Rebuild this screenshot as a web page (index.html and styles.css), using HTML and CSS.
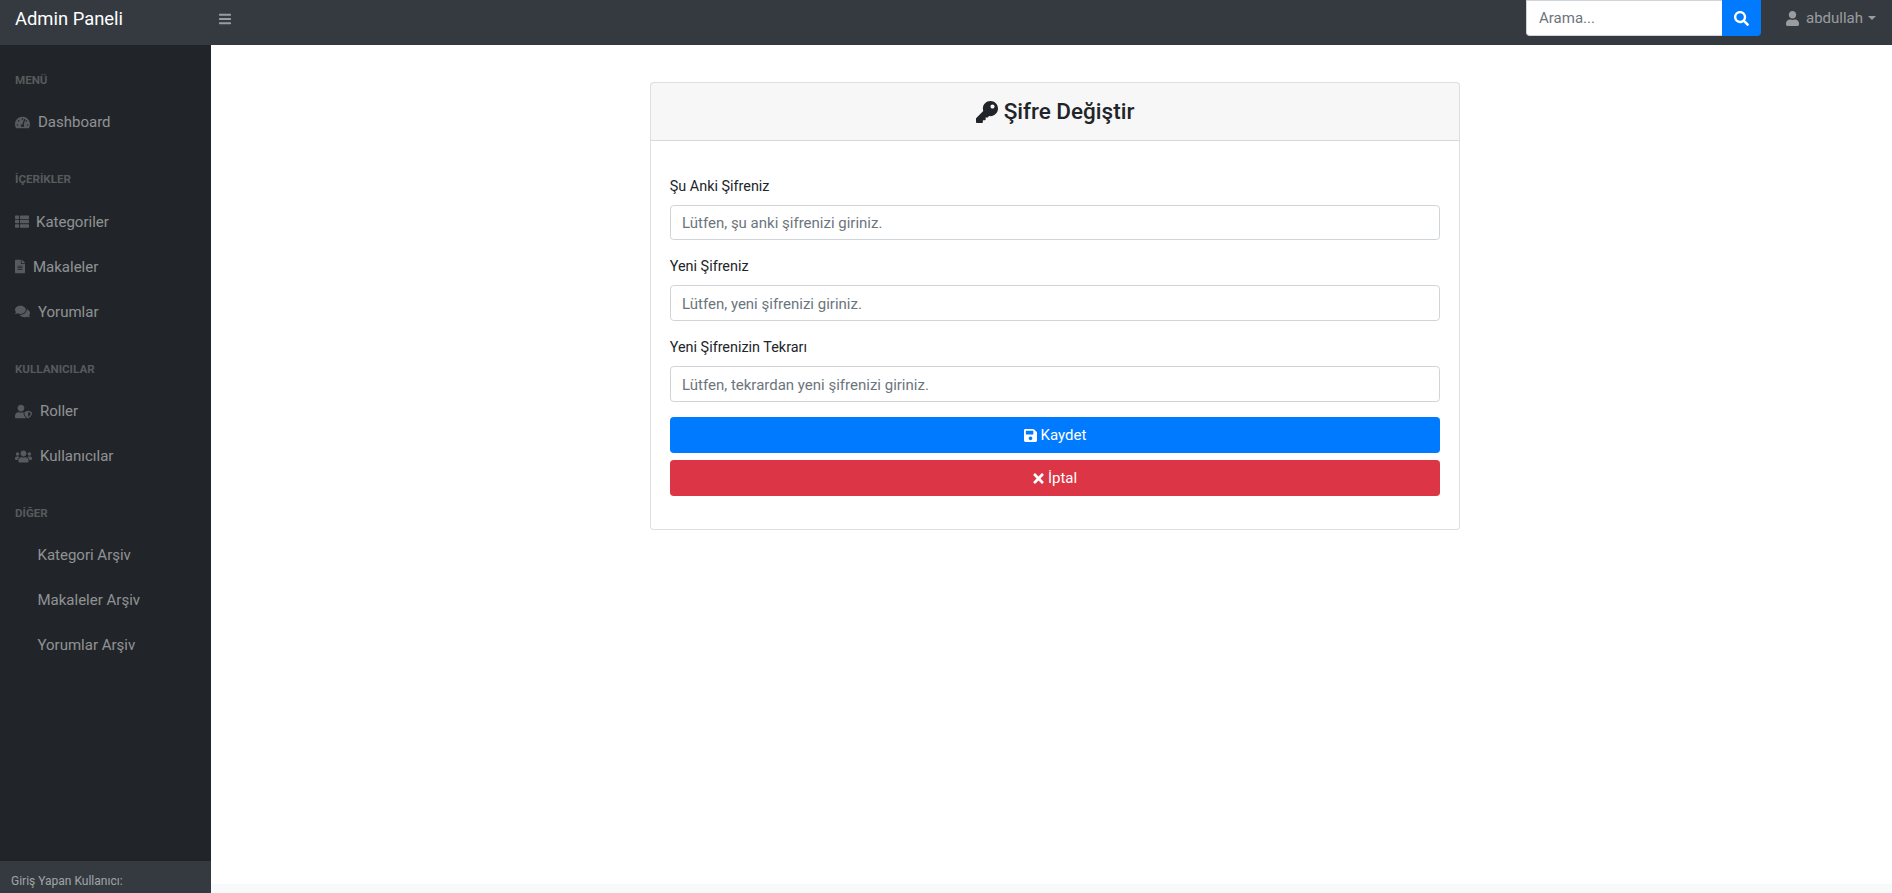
FILE: index.html
```html
<!DOCTYPE html>
<html lang="tr">
<head>
<meta charset="utf-8">
<title>Şifre Değiştir</title>
<link rel="stylesheet" href="styles.css">
</head>
<body>
<header class="topbar">
  <a class="brand">Admin Paneli</a>
  <button class="toggle"><svg class="icon ic-bars" viewBox="0 0 448 512"><path d="M16 132h416c8.837 0 16-7.163 16-16V76c0-8.837-7.163-16-16-16H16C7.163 60 0 67.163 0 76v40c0 8.837 7.163 16 16 16zm0 160h416c8.837 0 16-7.163 16-16v-40c0-8.837-7.163-16-16-16H16c-8.837 0-16 7.163-16 16v40c0 8.837 7.163 16 16 16zm0 160h416c8.837 0 16-7.163 16-16v-40c0-8.837-7.163-16-16-16H16c-8.837 0-16 7.163-16 16v40c0 8.837 7.163 16 16 16z"/></svg></button>
  <form class="search">
    <input class="search-input" type="text" placeholder="Arama...">
    <button class="search-btn" type="button"><svg class="icon ic-search" viewBox="0 0 512 512"><path d="M505 442.7L405.3 343c-4.5-4.5-10.6-7-17-7H372c27.6-35.3 44-79.7 44-128C416 93.1 322.9 0 208 0S0 93.1 0 208s93.1 208 208 208c48.3 0 92.7-16.4 128-44v16.3c0 6.4 2.5 12.5 7 17l99.7 99.7c9.4 9.4 24.6 9.4 33.9 0l28.3-28.3c9.4-9.4 9.4-24.6.1-34zM208 336c-70.7 0-128-57.2-128-128 0-70.7 57.2-128 128-128 70.7 0 128 57.2 128 128 0 70.7-57.2 128-128 128z"/></svg></button>
  </form>
  <a class="user"><svg class="icon ic-user" viewBox="0 0 448 512"><path d="M224 256c70.7 0 128-57.3 128-128S294.7 0 224 0 96 57.3 96 128s57.3 128 128 128zm89.6 32h-16.7c-22.2 10.2-46.9 16-72.9 16s-50.6-5.8-72.9-16h-16.7C60.2 288 0 348.2 0 422.4V464c0 26.5 21.5 48 48 48h352c26.5 0 48-21.5 48-48v-41.6c0-74.2-60.2-134.4-134.4-134.4z"/></svg><span>abdullah</span><i class="caret"></i></a>
</header>
<div class="layout">
  <nav class="sidebar">
    <div class="menu">
      <div class="heading">MENÜ</div>
      <a class="link"><svg class="icon ic-w15" viewBox="0 0 576 512"><path d="M288 32C128.94 32 0 160.94 0 320c0 52.8 14.25 102.26 39.06 144.8 5.61 9.62 16.3 15.2 27.44 15.2h443c11.14 0 21.83-5.58 27.44-15.2C561.75 422.26 576 372.8 576 320c0-159.06-128.94-288-288-288zm0 64c14.71 0 26.58 10.13 30.32 23.65-1.11 2.26-2.64 4.23-3.45 6.67l-9.22 27.67c-5.13 3.49-10.97 6.01-17.64 6.01-17.67 0-32-14.33-32-32S270.33 96 288 96zM96 384c-17.67 0-32-14.33-32-32s14.33-32 32-32 32 14.33 32 32-14.33 32-32 32zm48-160c-17.67 0-32-14.33-32-32s14.33-32 32-32 32 14.33 32 32-14.33 32-32 32zm246.77-72.41l-61.33 184C343.13 347.33 352 364.54 352 384c0 11.72-3.38 22.55-8.88 32H232.88c-5.5-9.45-8.88-20.28-8.88-32 0-33.94 26.5-61.43 59.9-63.59l61.34-184.01c4.17-12.56 17.73-19.45 30.36-15.17 12.57 4.19 19.35 17.79 15.17 30.36zm14.66 57.2l15.52-46.55c3.47-1.29 7.13-2.23 11.05-2.23 17.67 0 32 14.33 32 32s-14.33 32-32 32c-11.38-.01-20.89-6.28-26.57-15.22zM480 384c-17.67 0-32-14.33-32-32s14.33-32 32-32 32 14.33 32 32-14.33 32-32 32z"/></svg>Dashboard</a>
      <div class="heading">İÇERİKLER</div>
      <a class="link"><svg class="icon ic-w14" viewBox="0 0 512 512"><path d="M149.333 216v80c0 13.255-10.745 24-24 24H24c-13.255 0-24-10.745-24-24v-80c0-13.255 10.745-24 24-24h101.333c13.255 0 24 10.745 24 24zM0 376v80c0 13.255 10.745 24 24 24h101.333c13.255 0 24-10.745 24-24v-80c0-13.255-10.745-24-24-24H24c-13.255 0-24 10.745-24 24zM125.333 32H24C10.745 32 0 42.745 0 56v80c0 13.255 10.745 24 24 24h101.333c13.255 0 24-10.745 24-24V56c0-13.255-10.745-24-24-24zm80 448H488c13.255 0 24-10.745 24-24v-80c0-13.255-10.745-24-24-24H205.333c-13.255 0-24 10.745-24 24v80c0 13.255 10.745 24 24 24zm-24-424v80c0 13.255 10.745 24 24 24H488c13.255 0 24-10.745 24-24V56c0-13.255-10.745-24-24-24H205.333c-13.255 0-24 10.745-24 24zm24 264H488c13.255 0 24-10.745 24-24v-80c0-13.255-10.745-24-24-24H205.333c-13.255 0-24 10.745-24 24v80c0 13.255 10.745 24 24 24z"/></svg>Kategoriler</a>
      <a class="link"><svg class="icon ic-w10" viewBox="0 0 384 512"><path d="M224 136V0H24C10.7 0 0 10.7 0 24v464c0 13.3 10.7 24 24 24h336c13.3 0 24-10.7 24-24V160H248c-13.2 0-24-10.8-24-24zm64 236c0 6.6-5.4 12-12 12H108c-6.6 0-12-5.4-12-12v-8c0-6.6 5.4-12 12-12h168c6.6 0 12 5.4 12 12v8zm0-64c0 6.6-5.4 12-12 12H108c-6.6 0-12-5.4-12-12v-8c0-6.6 5.4-12 12-12h168c6.6 0 12 5.4 12 12v8zm0-72v8c0 6.6-5.4 12-12 12H108c-6.6 0-12-5.4-12-12v-8c0-6.6 5.4-12 12-12h168c6.6 0 12 5.4 12 12zm96-114.1v6.1H256V0h6.1c6.4 0 12.5 2.5 17 7l97.9 98c4.5 4.5 7 10.6 7 16.9z"/></svg>Makaleler</a>
      <a class="link"><svg class="icon ic-w15" viewBox="0 0 576 512"><path d="M416 192c0-88.4-93.1-160-208-160S0 103.6 0 192c0 34.3 14.1 65.9 38 92-13.4 30.2-35.5 54.2-35.8 54.5-2.2 2.3-2.8 5.7-1.5 8.7S4.8 352 8 352c36.6 0 66.9-12.3 88.7-25 32.2 15.7 70.3 25 111.3 25 114.9 0 208-71.6 208-160zm122 220c23.9-26 38-57.7 38-92 0-66.9-53.5-124.2-129.3-148.1.9 6.6 1.3 13.3 1.3 20.1 0 105.9-107.7 192-240 192-10.8 0-21.3-.8-31.7-1.9C207.8 439.6 281.8 480 368 480c41 0 79.1-9.2 111.3-25 21.8 12.7 52.1 25 88.7 25 3.2 0 6.1-1.9 7.3-4.8 1.3-2.9.7-6.3-1.5-8.7-.3-.3-22.4-24.2-35.8-54.5z"/></svg>Yorumlar</a>
      <div class="heading">KULLANICILAR</div>
      <a class="link"><svg class="icon ic-w17" viewBox="0 0 640 512"><path d="M622.3 271.1l-115.2-45c-4.1-1.6-12.6-3.7-22.2 0l-115.2 45c-10.7 4.2-17.7 14-17.7 24.9 0 111.6 68.7 188.8 132.9 213.9 9.6 3.7 18 1.6 22.2 0C558.4 489.9 640 420.5 640 296c0-10.9-7-20.7-17.7-24.9zM496 462.4V273.3l95.5 37.3c-5.6 87.1-60.9 135.4-95.5 151.8zM224 256c70.7 0 128-57.3 128-128S294.7 0 224 0 96 57.3 96 128s57.3 128 128 128zm96 40c0-2.5.8-4.8 1.1-7.2-2.5-.1-4.9-.8-7.5-.8h-16.7c-22.2 10.2-46.9 16-72.9 16s-50.6-5.8-72.9-16h-16.7C60.2 288 0 348.2 0 422.4V464c0 26.5 21.5 48 48 48h352c6.8 0 13.3-1.5 19.2-4-54-42.9-99.2-116.7-99.2-212z"/></svg>Roller</a>
      <a class="link"><svg class="icon ic-w17" viewBox="0 0 640 512"><path d="M96 224c35.3 0 64-28.7 64-64s-28.7-64-64-64-64 28.7-64 64 28.7 64 64 64zm448 0c35.3 0 64-28.7 64-64s-28.7-64-64-64-64 28.7-64 64 28.7 64 64 64zm32 32h-64c-17.6 0-33.5 7.1-45.1 18.6 40.3 22.1 68.9 62 75.1 109.4h66c17.7 0 32-14.3 32-32v-32c0-35.3-28.7-64-64-64zm-256 0c61.9 0 112-50.1 112-112S381.9 32 320 32 208 82.1 208 144s50.1 112 112 112zm76.8 32h-8.3c-20.8 10-43.9 16-68.5 16s-47.6-6-68.5-16h-8.3C179.6 288 128 339.6 128 403.2V432c0 26.5 21.5 48 48 48h288c26.5 0 48-21.5 48-48v-28.8c0-63.6-51.6-115.2-115.2-115.2zm-223.7-13.4C161.5 263.1 145.6 256 128 256H64c-35.3 0-64 28.7-64 64v32c0 17.7 14.3 32 32 32h65.9c6.3-47.4 34.9-87.3 75.2-109.4z"/></svg>Kullanıcılar</a>
      <div class="heading">DİĞER</div>
      <a class="link link-plain">Kategori Arşiv</a>
      <a class="link link-plain">Makaleler Arşiv</a>
      <a class="link link-plain">Yorumlar Arşiv</a>
    </div>
    <div class="side-footer">Giriş Yapan Kullanıcı:</div>
  </nav>
  <div class="content">
    <main class="main">
      <section class="card">
        <div class="card-header">
          <h4 class="card-title"><svg class="icon ic-key" viewBox="0 0 512 512"><path d="M512 176.001C512 273.203 433.202 352 336 352c-11.22 0-22.19-1.062-32.827-3.069l-24.012 27.014A23.999 23.999 0 0 1 261.223 384H224v40c0 13.255-10.745 24-24 24h-40v40c0 13.255-10.745 24-24 24H24c-13.255 0-24-10.745-24-24v-78.059c0-6.365 2.529-12.47 7.029-16.971l161.802-161.802C163.108 213.814 160 195.271 160 176 160 78.798 238.797.001 335.999 0 433.488-.001 512 78.511 512 176.001zM336 128c0 26.51 21.49 48 48 48s48-21.49 48-48-21.49-48-48-48-48 21.49-48 48z"/></svg>Şifre Değiştir</h4>
        </div>
        <form class="card-body">
          <div class="group">
            <label class="label">Şu Anki Şifreniz</label>
            <input class="input" type="password" placeholder="Lütfen, şu anki şifrenizi giriniz.">
          </div>
          <div class="group">
            <label class="label">Yeni Şifreniz</label>
            <input class="input" type="password" placeholder="Lütfen, yeni şifrenizi giriniz.">
          </div>
          <div class="group">
            <label class="label">Yeni Şifrenizin Tekrarı</label>
            <input class="input" type="password" placeholder="Lütfen, tekrardan yeni şifrenizi giriniz.">
          </div>
          <div class="actions">
            <button class="btn btn-primary" type="button"><svg class="icon ic-save" viewBox="0 0 448 512"><path d="M433.941 129.941l-83.882-83.882A48 48 0 0 0 316.118 32H48C21.49 32 0 53.49 0 80v352c0 26.51 21.49 48 48 48h352c26.51 0 48-21.49 48-48V163.882a48 48 0 0 0-14.059-33.941zM224 416c-35.346 0-64-28.654-64-64 0-35.346 28.654-64 64-64s64 28.654 64 64c0 35.346-28.654 64-64 64zm96-304.52V212c0 6.627-5.373 12-12 12H76c-6.627 0-12-5.373-12-12V108c0-6.627 5.373-12 12-12h228.52c3.183 0 6.235 1.264 8.485 3.515l3.48 3.48A11.996 11.996 0 0 1 320 111.48z"/></svg>Kaydet</button>
            <button class="btn btn-danger" type="button"><svg class="icon ic-times" viewBox="0 0 352 512"><path d="M242.72 256l100.07-100.07c12.28-12.28 12.28-32.19 0-44.48l-22.24-22.24c-12.28-12.28-32.19-12.28-44.48 0L176 189.28 75.93 89.21c-12.28-12.28-32.19-12.28-44.48 0L9.21 111.45c-12.28 12.28-12.28 32.19 0 44.48L109.28 256 9.21 356.07c-12.28 12.28-12.28 32.19 0 44.48l22.24 22.24c12.28 12.28 32.2 12.28 44.48 0L176 322.72l100.07 100.07c12.28 12.28 32.2 12.28 44.48 0l22.24-22.24c12.28-12.28 12.28-32.19 0-44.48L242.72 256z"/></svg>İptal</button>
          </div>
        </form>
      </section>
    </main>
    <footer class="page-footer"></footer>
  </div>
</div>
</body>
</html>
```

FILE: styles.css
```css
html { font-size: 15px; }
* { box-sizing: border-box; }
body {
  margin: 0;
  height: 100vh;
  overflow: hidden;
  display: flex;
  flex-direction: column;
  font-family: "Roboto", "Noto Sans", sans-serif;
  font-size: 15px;
  line-height: 22.5px;
  color: #212529;
  background: #fff;
}
.icon { display: block; flex: none; fill: currentColor; }

.topbar {
  flex: none;
  height: 45px;
  display: flex;
  align-items: flex-start;
  background: #343a40;
}
.brand {
  width: 211px;
  padding-left: 15px;
  font-size: 18.4px;
  line-height: 37px;
  color: #fff;
}
.toggle {
  margin: 0 0 0 8px;
  padding: 0;
  height: 37px;
  border: 0;
  background: none;
  color: rgba(255,255,255,.5);
  display: flex;
  align-items: center;
}
.ic-bars { width: 12px; height: 14px; }
.search { margin-left: auto; display: flex; height: 36px; }
.search-input {
  width: 196px;
  height: 36px;
  padding: 6px 12px;
  border: 1px solid #ced4da;
  border-right: 0;
  border-radius: 0 0 0 4px;
  font: inherit;
  color: #495057;
  background: #fff;
  outline: 0;
}
.search-input::placeholder { color: #6c757d; opacity: 1; }
.search-btn {
  width: 39px;
  height: 36px;
  padding: 0;
  border: 0;
  border-radius: 0 0 4px 0;
  background: #007bff;
  color: #fff;
  display: flex;
  align-items: center;
  justify-content: center;
}
.ic-search { width: 15px; height: 15px; }
.user {
  width: 131px;
  padding-left: 25px;
  height: 36px;
  display: flex;
  align-items: center;
  color: rgba(255,255,255,.5);
}
.ic-user { width: 13px; height: 15px; margin-right: 7px; }
.caret {
  margin-left: 5px;
  border-top: 4.5px solid rgba(255,255,255,.5);
  border-left: 4.5px solid transparent;
  border-right: 4.5px solid transparent;
}

.layout { flex: 1; min-height: 0; display: flex; }
.sidebar {
  flex: none;
  width: 211px;
  display: flex;
  flex-direction: column;
  justify-content: space-between;
  background: #212529;
}
.menu { padding-top: .6px; }
.heading {
  padding: 26.25px 15px 11.25px;
  font-size: 11.6px;
  line-height: 16.875px;
  font-weight: 700;
  color: rgba(255,255,255,.25);
}
.link {
  display: flex;
  align-items: center;
  gap: 8px;
  padding: 11.25px 15px;
  color: rgba(255,255,255,.5);
}
.link .icon { height: 15px; color: rgba(255,255,255,.25); }
.link .ic-w14 { margin-right: -1px; }
.link-plain { padding-left: 37.5px; }
.ic-w15 { width: 15px; }
.ic-w14 { width: 14px; }
.ic-w10 { width: 10px; }
.ic-w17 { width: 17px; }
.side-footer {
  height: 32px;
  padding: 10px 11px 0;
  font-size: 12px;
  line-height: 20px;
  color: rgba(255,255,255,.55);
  background: #343a40;
}

.content { flex: 1; min-width: 0; display: flex; flex-direction: column; }
.main {
  flex: 1;
  display: flex;
  justify-content: center;
  align-items: flex-start;
  padding: 37px 0 0 7px;
}
.page-footer { flex: none; height: 9px; background: #f8f9fa; }

.card {
  width: 810px;
  border: 1px solid rgba(0,0,0,.125);
  border-radius: 4px;
  background: #fff;
}
.card-header {
  padding: 15px;
  background: rgba(0,0,0,.03);
  border-bottom: 1px solid rgba(0,0,0,.125);
}
.card-title {
  margin: 0;
  display: flex;
  align-items: center;
  justify-content: center;
  gap: 6px;
  font-size: 22.5px;
  font-weight: 500;
  line-height: 27px;
}
.ic-key { width: 22px; height: 22px; }
.card-body { padding: 33.5px 18.75px 18px; display: flex; flex-direction: column; }
.group { margin-bottom: 15px; }
.label {
  display: block;
  padding-top: 1px;
  margin-bottom: 6.5px;
  font-size: 14.4px;
}
.input {
  display: block;
  width: 100%;
  height: 35.75px;
  padding: 6.6px 11.25px 4.6px;
  border: 1px solid #ced4da;
  border-radius: 3.75px;
  font: inherit;
  color: #495057;
  background: #fff;
  outline: 0;
}
.input::placeholder { color: #6c757d; opacity: 1; }
.actions { display: flex; flex-direction: column; gap: 7.5px; margin-bottom: 15px; }
.btn {
  height: 35.75px;
  padding: 1px 0 0;
  border: 1px solid transparent;
  border-radius: 3.75px;
  font: inherit;
  color: #fff;
  display: flex;
  align-items: center;
  justify-content: center;
  gap: 4px;
}
.btn-primary { background: #007bff; }
.btn-danger { background: #dc3545; }
.ic-save { width: 13px; height: 15px; }
.ic-times { width: 11px; height: 15px; }
```
